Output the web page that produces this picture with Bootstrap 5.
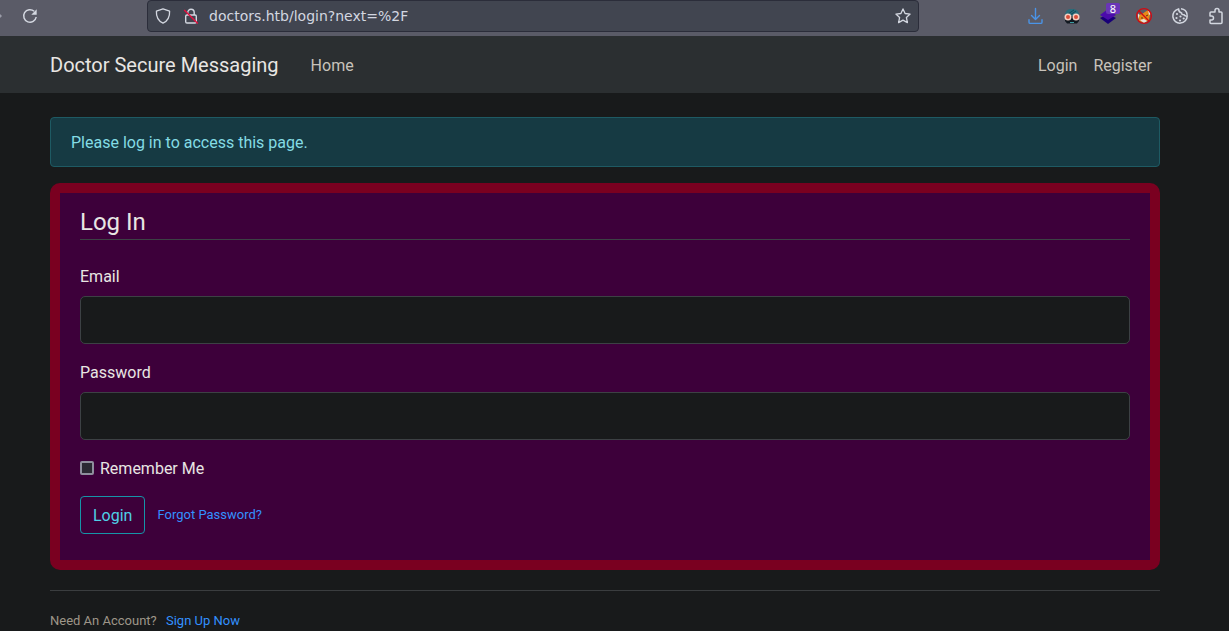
<!DOCTYPE html>
<html lang="en">
<head>
<meta charset="utf-8">
<meta name="viewport" content="width=device-width, initial-scale=1">
<title>Doctor Secure Messaging</title>
<link href="https://cdn.jsdelivr.net/npm/bootstrap@5.3.0/dist/css/bootstrap.min.css" rel="stylesheet">
<style>
  body { background: #181a1b; color: #e8e6e3; font-family: Roboto, "Liberation Sans", sans-serif; font-size: 16px; line-height: 24px; }
  a { color: #3391ff; text-decoration: none; }
  svg { display: block; }

  /* browser toolbar */
  .toolbar { display: grid; grid-template-columns: 147px minmax(0, 772px) 1fr; height: 36px; background: #5a5b67; color: #d3d7e0; }
  .toolbar button { background: none; border: 0; padding: 0; color: inherit; }
  .address { height: 32px; background: #414550; border: 1px solid #2b2d3a; border-radius: 4px; padding: 0 7px; gap: 12px; }
  .address input { background: none; border: 0; outline: 0; padding: 0; margin-left: -2px; color: #d3d7e0; font: 14px/20px "DejaVu Sans", sans-serif; min-width: 0; }
  .tools { gap: 16px; padding-right: 3px; }
  .reload-side { gap: 20px; }
  .counter { position: absolute; left: 8px; top: -3px; width: 14px; height: 11px; border-radius: 2px; background: #6a35b8; color: #fff; font: 11px/11px "Noto Sans", sans-serif; text-align: center; }

  .gutter-end { padding-right: 19px; }
  .container { --bs-gutter-x: 30px; }

  .site-nav { background: #2b2f31; padding-top: 9px; padding-bottom: 8px; }
  .site-nav .container { padding: 0 15px; }
  .site-nav .navbar-brand { color: #e8e6e3; font-size: 20px; line-height: 30px; padding: 5px 0; margin-right: 24px; }
  .site-nav .nav-link { color: #c8c3bb; padding: 9px 8px 7px; }

  .notice { background: #163a43; border: 1px solid #1e5a63; color: #84dce5; border-radius: 4px; padding: 13px 20px 11px; }
  .panel { background: #3d003a; border: 10px solid #7a0020; border-radius: 10px; padding: 10px 20px; }
  .panel legend { font-size: 24px; line-height: 34px; padding-top: 2px; border-bottom: 1px solid #3c4144; }
  .panel label { padding-top: 1px; }
  .panel .field-label { display: block; margin-bottom: 7px; }
  .panel .form-control { background: #181a1b; border: 1px solid #3c4144; border-radius: 5px; color: #e8e6e3; height: 48px; }
  .remember { gap: 6px; height: 24px; }
  .remember input { appearance: none; width: 14px; height: 14px; margin: 0; border: 2px solid #8f8f9d; border-radius: 2px; background: #2b2a33; }
  .remember input:checked { background: #3391ff; }
  .remember label { padding-top: 2px; }
  .btn-login { color: #4fd0e7; border: 1px solid #1695a8; border-radius: 4px; padding: 7px 12px 5px; font-size: 16px; line-height: 24px; }
  .btn-login:hover { color: #e8e6e3; background: #128293; }
  .fine { font-size: 13px; line-height: 20px; }
  .signup { margin-top: 20px; padding-top: 20px; border-top: 1px solid #3a3d3f; color: #9e9689; }
  .signup a { margin-left: 6px; }
</style>
</head>
<body>
<header class="toolbar">
  <div class="reload-side d-flex align-items-center pb-1">
    <svg width="2" height="16" viewBox="0 0 2 16"><path d="M0 6l2 2-2 2z" fill="#9a9ca8"/></svg>
    <button type="button" aria-label="Reload">
      <svg width="16" height="16" viewBox="0 0 16 16" fill="none" stroke="currentColor" stroke-width="1.500"><path d="M14.200 9a6.300 6.300 0 1 1-2-5.700"/><path d="M14.700 1.300v5.400H9.300z" fill="currentColor" stroke="none"/></svg>
    </button>
  </div>
  <div class="address d-flex align-items-center">
    <svg width="16" height="16" viewBox="0 0 16 16" fill="none" stroke="currentColor" stroke-width="1.300" stroke-linejoin="round"><path d="M8 .8l6.600 2.400c.3 5.800-1.500 9.500-6.600 12C2.900 12.700 1.100 9 1.400 3.200z"/></svg>
    <svg width="16" height="16" viewBox="0 0 16 16" fill="none" stroke="currentColor" stroke-width="1.400"><rect x="2.700" y="7" width="10.600" height="8" rx="1.300"/><path d="M4.800 7V4.500a3.200 3.200 0 0 1 6.400 0V7"/><path d="M1.200 2l13.600 13.500" stroke="#e4103f" stroke-width="1.500"/></svg>
    <input class="flex-grow-1" type="text" aria-label="Address" value="doctors.htb/login?next=%2F">
    <button type="button" aria-label="Bookmark">
      <svg width="16" height="16" viewBox="0 0 16 16" fill="none" stroke="currentColor" stroke-width="1.300" stroke-linejoin="round"><path d="M8 .9l2.100 4.600 5 .6-3.700 3.400 1 5.100L8 12.100l-4.400 2.500 1-5.100L.9 6.100l5-.6z"/></svg>
    </button>
  </div>
  <div class="tools d-flex align-items-center justify-content-end pb-1">
    <button type="button" aria-label="Downloads">
      <svg width="20" height="20" viewBox="0 0 20 20" fill="none" stroke="#4a94e8" stroke-width="1.400" stroke-linecap="round" stroke-linejoin="round"><path d="M9.500 2.500v11M5.500 9.500l4 4 4-4M3 13.800v2.400q0 1.200 1.200 1.200h10.600q1.200 0 1.200-1.200v-2.400"/></svg>
    </button>
    <button type="button" aria-label="Disguise">
      <svg width="20" height="20" viewBox="0 0 20 20"><path d="M3 8.500C4 4 6 3 10 3s6.500 1.500 7 5.500l-2 2H5z" fill="#286c7a"/><path d="M6 8l6-4M8 9l6-4" stroke="#164957"/><path d="M3 10h14v5l-2 2.500H5L3 15z" fill="#111820"/><circle cx="6" cy="11" r="3.500" fill="#f6cfc2"/><circle cx="14" cy="11" r="3.500" fill="#f6cfc2"/><circle cx="6" cy="11" r="2" fill="#d94d38"/><circle cx="14" cy="11" r="2" fill="#d94d38"/><path d="M8 16.500h4" stroke="#3c9ca3"/></svg>
    </button>
    <button type="button" class="position-relative" aria-label="Layers, 8">
      <svg width="20" height="20" viewBox="0 0 20 20"><path d="M2 12l8-4 8 4-8 6z" fill="#180077"/><path d="M2 9l8-6 8 6-8 5z" fill="#4b0bab"/></svg>
      <span class="counter">8</span>
    </button>
    <button type="button" aria-label="Blocker">
      <svg width="20" height="20" viewBox="0 0 20 20"><path d="M4 9l4-1 6-4 2 5-1 5-5 3-5-2z" fill="#e88a18"/><path d="M3.500 7l2 2-1 4zM14 4l3 4-2 1zM6 14l4-1 3 2-3 2z" fill="#e8e2de"/><path d="M7 12l2 0M12 10l2-1" stroke="#5d3518"/><circle cx="10" cy="10" r="7.400" fill="none" stroke="#d00b13" stroke-width="1.300"/><path d="M4.800 4.800l10.400 10.400" stroke="#d00b13" stroke-width="1.300"/></svg>
    </button>
    <button type="button" aria-label="Cookies">
      <svg width="20" height="20" viewBox="0 0 20 20"><path d="M8.500 2.900a7.200 7.200 0 1 0 8.700 7q-2 .5-3.200-1.200-2.300.3-2.500-1.800-2.700-.6-3-4zM11 2.800c3 .3 5.700 2.500 6.200 6" fill="none" stroke="currentColor" stroke-width="1.500"/><g fill="currentColor"><circle cx="7" cy="8" r="1.100"/><circle cx="6.500" cy="12" r="1.100"/><circle cx="10.500" cy="10.500" r="1.100"/><circle cx="10" cy="14.500" r="1.100"/><circle cx="13.700" cy="12.500" r="1.100"/></g></svg>
    </button>
    <button type="button" aria-label="Extensions">
      <svg width="20" height="20" viewBox="0 0 20 20" fill="none" stroke="currentColor" stroke-width="1.500" stroke-linejoin="round"><path d="M4 8.500V7q0-1 1-1h4V4.500a2 2 0 0 1 4 0V6h2q1 0 1 1v9.500q0 1-1 1H5q-1 0-1-1V14h1.500a2 2 0 0 0 0-4H4z"/></svg>
    </button>
  </div>
</header>

<nav class="site-nav navbar navbar-expand">
  <div class="gutter-end w-100">
    <div class="container d-flex align-items-center">
      <a class="navbar-brand" href="#">Doctor Secure Messaging</a>
      <ul class="navbar-nav me-auto"><li class="nav-item"><a class="nav-link" href="#">Home</a></li></ul>
      <ul class="navbar-nav">
        <li class="nav-item"><a class="nav-link" href="#">Login</a></li>
        <li class="nav-item"><a class="nav-link" href="#">Register</a></li>
      </ul>
    </div>
  </div>
</nav>

<main class="gutter-end pt-4">
  <div class="container">
    <div class="notice mb-3" role="alert">Please log in to access this page.</div>
    <form class="panel">
      <fieldset>
        <legend class="mb-4">Log In</legend>
        <div class="mb-3">
          <label class="field-label" for="email">Email</label>
          <input class="form-control" type="email" id="email">
        </div>
        <div class="mb-3">
          <label class="field-label" for="password">Password</label>
          <input class="form-control" type="password" id="password">
        </div>
        <div class="remember d-flex align-items-center mb-3">
          <input type="checkbox" id="remember">
          <label for="remember">Remember Me</label>
        </div>
      </fieldset>
      <div class="d-flex align-items-center mb-3">
        <button class="btn btn-login" type="submit">Login</button>
        <a class="fine ms-2 ps-1" href="#">Forgot Password?</a>
      </div>
    </form>
    <div class="signup fine">Need An Account? <a href="#">Sign Up Now</a></div>
  </div>
</main>
<script src="https://cdn.jsdelivr.net/npm/bootstrap@5.3.0/dist/js/bootstrap.bundle.min.js"></script>
</body>
</html>
